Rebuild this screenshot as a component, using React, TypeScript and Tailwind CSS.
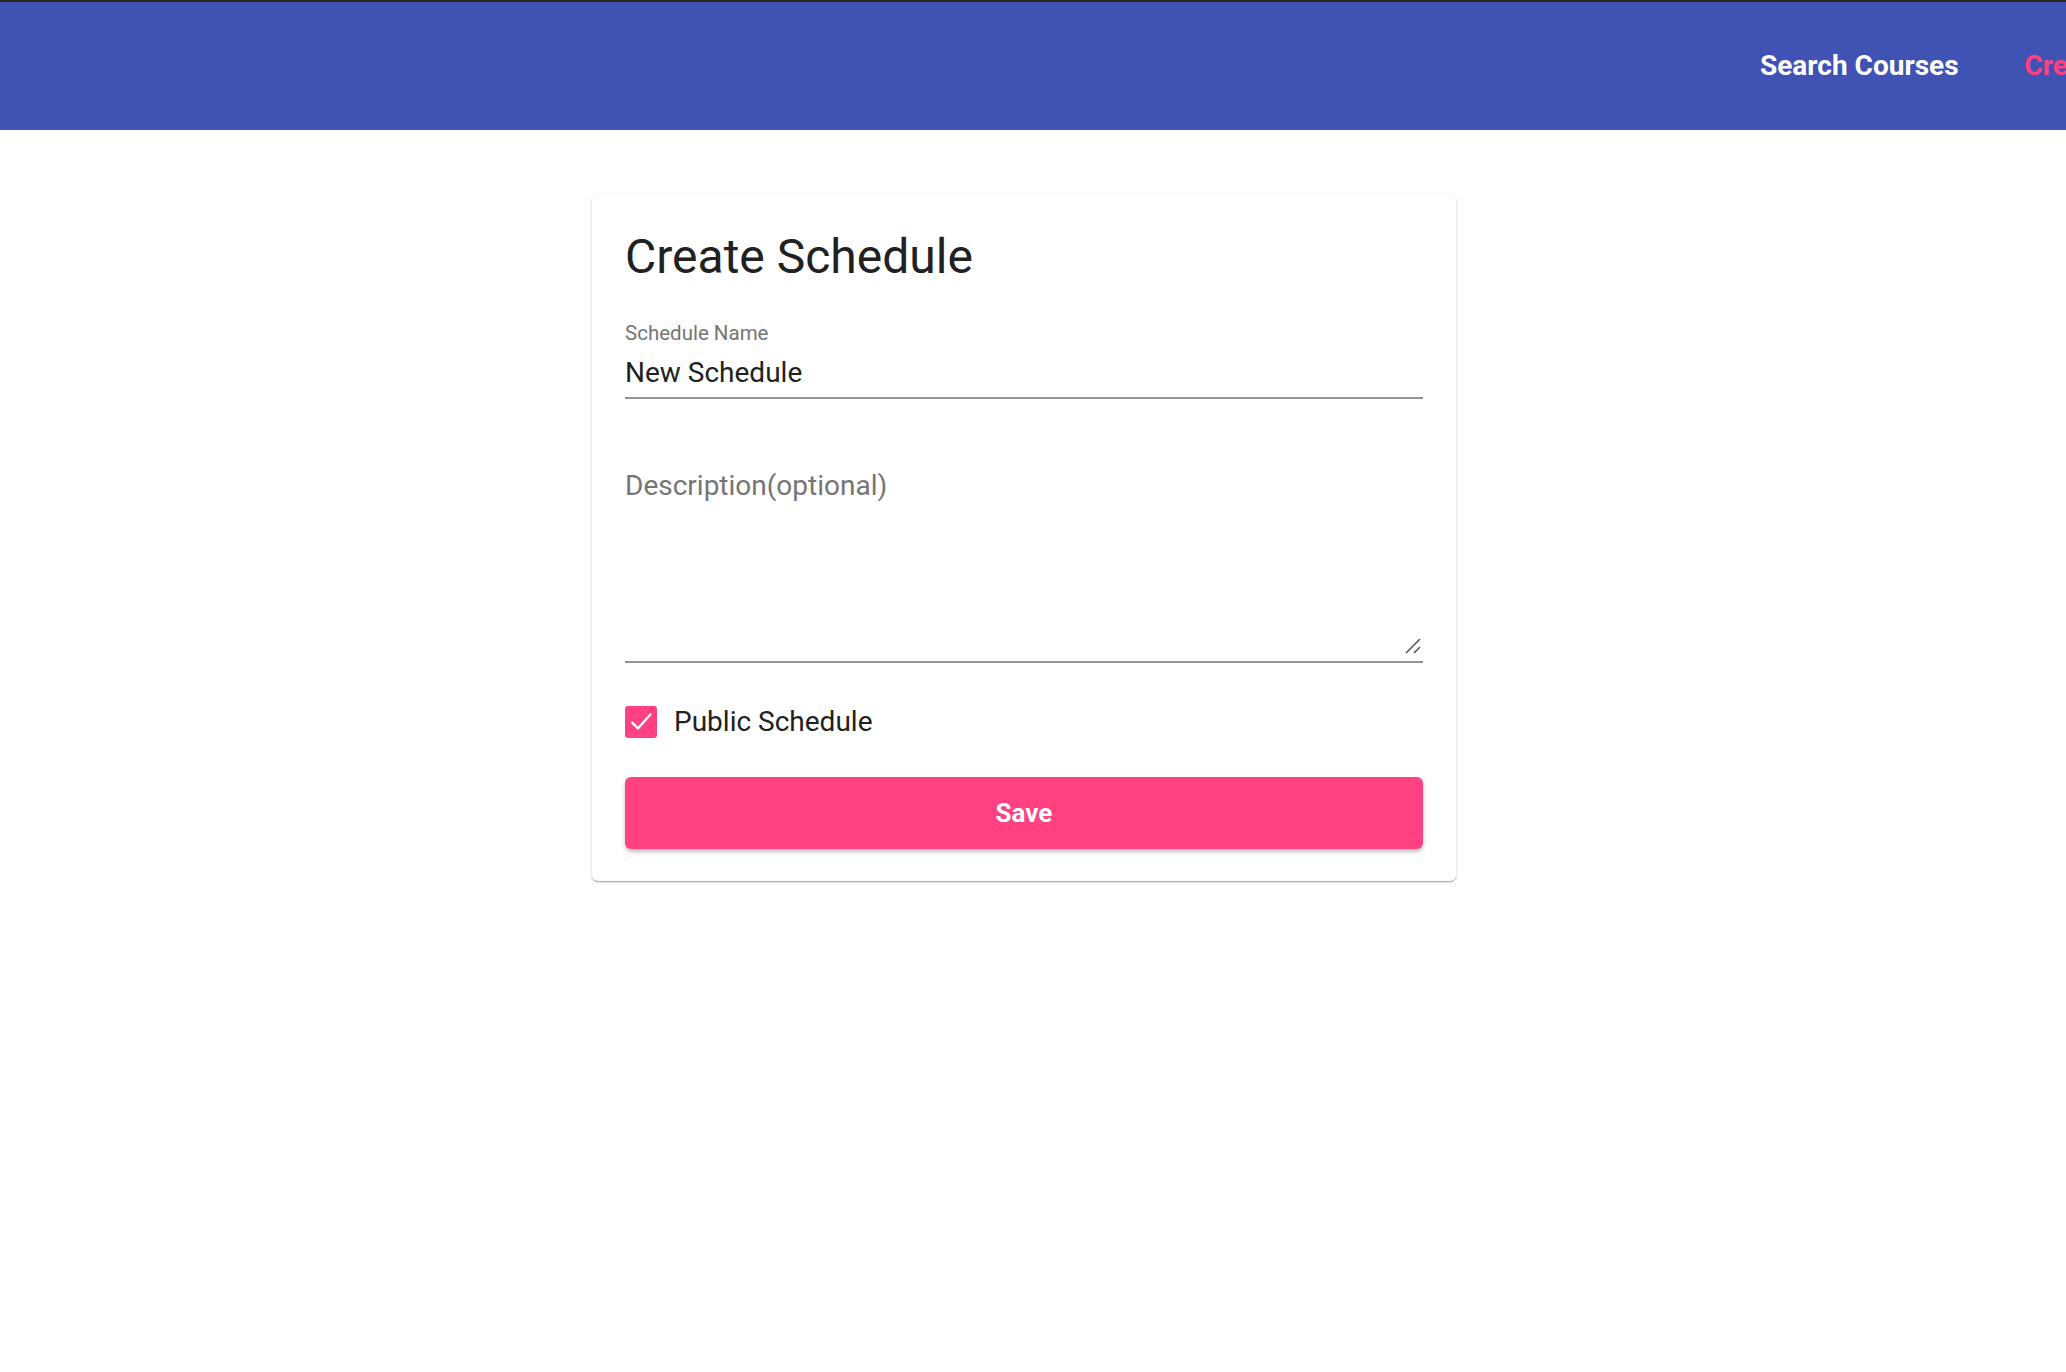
export default function App() {
  return (
    <div className="min-h-screen bg-white font-['Roboto',_'Liberation_Sans',_sans-serif]">
      {/* Top bar */}
      <header className="border-t-2 border-[#262626] bg-[#4053b4] h-[130px] flex items-center pl-[1760px] overflow-hidden whitespace-nowrap">
        <nav className="flex items-center gap-[66px] text-[28px] font-bold">
          <a href="#" className="text-white">
            Search Courses
          </a>
          <a href="#" className="text-[#ff4081]">
            Create Schedule
          </a>
        </nav>
      </header>

      <main className="pt-[64px]">
        {/* Card */}
        <div className="ml-[592px] w-[864px] bg-white rounded-md shadow-[0_1px_3px_rgba(0,0,0,0.2),0_1px_1px_rgba(0,0,0,0.14),0_2px_1px_-1px_rgba(0,0,0,0.12)] px-[33px] pt-[35px] pb-[32px]">
          <h1 className="text-[48px] leading-[56px] text-[#212121]">Create Schedule</h1>

          {/* Schedule name */}
          <div className="mt-[38px]">
            <label className="block text-[20.5px] leading-[21px] text-[#757575]">Schedule Name</label>
            <input
              defaultValue="New Schedule"
              className="mt-[13px] w-full text-[28px] leading-[32px] text-[#212121] pb-[8px] border-b-2 border-[#949494] outline-none bg-transparent"
            />
          </div>

          {/* Description */}
          <div className="relative mt-[71px]">
            <textarea
              placeholder="Description(optional)"
              className="block w-full h-[193px] text-[28px] leading-[32px] text-[#212121] placeholder:text-[#757575] border-b-2 border-[#949494] outline-none bg-transparent resize-none"
            />
            <svg className="absolute right-[2px] bottom-[9px]" width="16" height="16" viewBox="0 0 16 16" fill="none">
              <path d="M1 15L15 1" stroke="#555" strokeWidth="1.6" />
              <path d="M9 15L15 9" stroke="#555" strokeWidth="1.6" />
            </svg>
          </div>

          {/* Public checkbox */}
          <label className="mt-[43px] flex items-center gap-[17px]">
            <span className="w-[32px] h-[32px] rounded-[3px] bg-[#ff4081] flex items-center justify-center">
              <svg width="28" height="28" viewBox="0 0 24 24" fill="none">
                <path d="M4.5 12.5l4.8 5L20 5.5" stroke="white" strokeWidth="2" strokeLinecap="round" strokeLinejoin="round" />
              </svg>
            </span>
            <span className="text-[28px] leading-[32px] text-[#212121]">Public Schedule</span>
          </label>

          {/* Save */}
          <button className="mt-[39px] w-full h-[72px] rounded-md bg-[#ff4081] text-white text-[26px] font-bold shadow-[0_3px_4px_rgba(0,0,0,0.25)]">
            Save
          </button>
        </div>
      </main>
    </div>
  );
}
